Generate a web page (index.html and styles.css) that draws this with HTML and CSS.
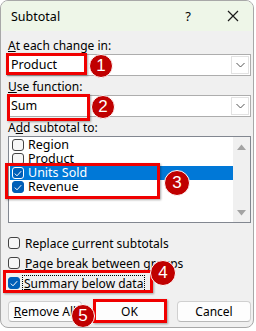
FILE: index.html
```html
<!DOCTYPE html>
<html lang="en">
<head>
    <meta charset="UTF-8">
    <meta name="viewport" content="width=device-width, initial-scale=1.0">
    <title>Subtotal</title>
    <link rel="stylesheet" href="styles.css">
</head>
<body>
<div class="dialog">
    <div class="titlebar">
        <span class="title">Subtotal</span>
        <span class="help">?</span>
        <svg class="close" width="12" height="12" viewBox="0 0 12 12">
            <path d="M1 1 L11 11 M11 1 L1 11" stroke="#1a1a1a" stroke-width="1.2" fill="none"/>
        </svg>
    </div>

    <div class="content">
        <div class="field-label"><u>A</u>t each change in:</div>
        <div class="combo">
            <span class="combo-value">Product</span>
            <span class="combo-btn">
                <svg width="9" height="6" viewBox="0 0 9 6"><path d="M0.5 1 L4.5 5 L8.5 1" stroke="#555" stroke-width="1" fill="none"/></svg>
            </span>
        </div>

        <div class="field-label gap"><u>U</u>se function:</div>
        <div class="combo">
            <span class="combo-value">Sum</span>
            <span class="combo-btn">
                <svg width="9" height="6" viewBox="0 0 9 6"><path d="M0.5 1 L4.5 5 L8.5 1" stroke="#555" stroke-width="1" fill="none"/></svg>
            </span>
        </div>

        <div class="field-label gap">A<u>d</u>d subtotal to:</div>
        <div class="listbox">
            <div class="list-items">
                <div class="item"><span class="box"></span><span>Region</span></div>
                <div class="item"><span class="box"></span><span>Product</span></div>
                <div class="item selected"><span class="box checked"><svg width="8" height="7" viewBox="0 0 8 7"><path d="M0.8 3.6 L3 5.8 L7.2 1.2" stroke="#fff" stroke-width="1" fill="none"/></svg></span><span>Units Sold</span></div>
                <div class="item"><span class="box checked"><svg width="8" height="7" viewBox="0 0 8 7"><path d="M0.8 3.6 L3 5.8 L7.2 1.2" stroke="#fff" stroke-width="1" fill="none"/></svg></span><span>Revenue</span></div>
            </div>
            <div class="scrollbar">
                <svg width="9" height="6" viewBox="0 0 9 6"><path d="M0 6 L4.5 0.5 L9 6 Z" fill="#a3a3a3"/></svg>
                <svg width="9" height="6" viewBox="0 0 9 6"><path d="M0 0 L4.5 5.5 L9 0 Z" fill="#a3a3a3"/></svg>
            </div>
        </div>

        <div class="options">
            <div class="check"><span class="box"></span><span class="check-text">Replace <u>c</u>urrent subtotals</span></div>
            <div class="check"><span class="box"></span><span class="check-text"><u>P</u>age break between groups</span></div>
            <div class="check"><span class="box checked"><svg width="8" height="7" viewBox="0 0 8 7"><path d="M0.8 3.6 L3 5.8 L7.2 1.2" stroke="#fff" stroke-width="1" fill="none"/></svg></span><span class="check-text focus"><u>S</u>ummary below data</span></div>
        </div>

        <div class="buttons">
            <div class="btn"><u>R</u>emove All</div>
            <div class="btn">OK</div>
            <div class="btn">Cancel</div>
        </div>
    </div>

    <!-- annotations -->
    <div class="mark m1"></div>
    <div class="mark m2"></div>
    <div class="mark m3"></div>
    <div class="mark m4"></div>
    <div class="mark m5"></div>
    <div class="step s1">1</div>
    <div class="step s2">2</div>
    <div class="step s3">3</div>
    <div class="step s4">4</div>
    <div class="step s5">5</div>
</div>
</body>
</html>
```

FILE: styles.css
```css
body {
    margin: 0;
    background: #ffffff;
    font-family: 'Noto Sans', sans-serif;
    font-size: 12px;
    color: #000;
}

.dialog {
    position: relative;
    width: 252px;
    height: 326px;
    background: #f0f0f0;
    border: 1px solid #a8a8a8;
    border-radius: 8px;
    overflow: hidden;
}

.titlebar {
    display: flex;
    align-items: center;
    height: 30px;
    background: #eef6e8;
    padding-left: 10px;
}

.title {
    font-size: 12.5px;
    flex: 1;
}

.help {
    font-size: 13px;
    margin-right: 36px;
}

.close {
    margin-right: 14px;
}

.content {
    padding: 8px 2px 0 6px;
}

.field-label {
    line-height: 14px;
    height: 14px;
    margin-bottom: 1px;
    padding-left: 1px;
}

.field-label.gap {
    margin-top: 4px;
}

.combo {
    display: flex;
    height: 20px;
    background: #fff;
    border: 1px solid #adadad;
}

.combo-value {
    flex: 1;
    line-height: 20px;
    padding-left: 3px;
    font-size: 12.5px;
}

.combo-btn {
    width: 16px;
    margin: 1px;
    border: 1px solid #e2e2e2;
    display: flex;
    align-items: center;
    justify-content: center;
}

.listbox {
    display: flex;
    height: 85px;
    margin-left: 1px;
    background: #fff;
    border: 1px solid #828790;
}

.list-items {
    flex: 1;
    padding: 1px 0 0 1px;
}

.item {
    display: flex;
    align-items: center;
    height: 14px;
    line-height: 14px;
    font-size: 12.5px;
    padding-left: 2px;
}

.item.selected {
    background: #0078d7;
    color: #fff;
}

.box {
    width: 10px;
    height: 10px;
    border: 1px solid #444;
    border-radius: 3px;
    background: #f7f7f7;
    margin-right: 4px;
    display: flex;
    align-items: center;
    justify-content: center;
    flex-shrink: 0;
}

.box.checked {
    background: #005fb8;
    border-color: #005fb8;
}

.item.selected .box.checked {
    border-color: #fff;
}

.scrollbar {
    width: 17px;
    background: #f0f0f0;
    display: flex;
    flex-direction: column;
    justify-content: space-between;
    align-items: center;
    padding: 7px 0 6px;
}

.options {
    margin-top: 10px;
}

.check {
    display: flex;
    align-items: center;
    height: 20px;
    padding-left: 1px;
}

.check .box {
    margin-right: 5px;
}

.check-text {
    white-space: nowrap;
    line-height: 15px;
}

.focus {
    outline: 1px dotted #000;
    padding: 0 1px;
    margin-left: -2px;
}

.buttons {
    display: flex;
    justify-content: space-between;
    margin-top: 8px;
    padding-left: 1px;
}

.btn {
    width: 72px;
    height: 19px;
    line-height: 19px;
    text-align: center;
    background: #fdfdfd;
    border: 1px solid #d0d0d0;
    border-bottom-color: #b8b8b8;
    border-radius: 4px;
}

.mark {
    position: absolute;
    border: 3px solid #f00000;
    box-shadow: 1px 1px 2px rgba(0, 0, 0, 0.35);
    box-sizing: border-box;
}

.m1 { left: 5px; top: 52px; width: 81px; height: 22px; }
.m2 { left: 6px; top: 93px; width: 83px; height: 27px; }
.m3 { left: 4px; top: 162px; width: 155px; height: 36px; }
.m4 { left: 2px; top: 269px; width: 150px; height: 23px; }
.m5 { left: 92px; top: 298px; width: 74px; height: 24px; }

.step {
    position: absolute;
    width: 24px;
    height: 24px;
    border-radius: 50%;
    background: #c00000;
    border: 1.5px solid #fff;
    box-sizing: border-box;
    color: #fff;
    font-family: 'Liberation Sans', sans-serif;
    font-size: 17px;
    line-height: 22px;
    text-align: center;
}

.s1 { left: 88px; top: 53px; }
.s2 { left: 90px; top: 94px; }
.s3 { left: 163px; top: 169px; width: 26px; height: 26px; line-height: 24px; }
.s4 { left: 149px; top: 259px; width: 26px; height: 26px; line-height: 24px; }
.s5 { left: 70px; top: 303px; }
```
